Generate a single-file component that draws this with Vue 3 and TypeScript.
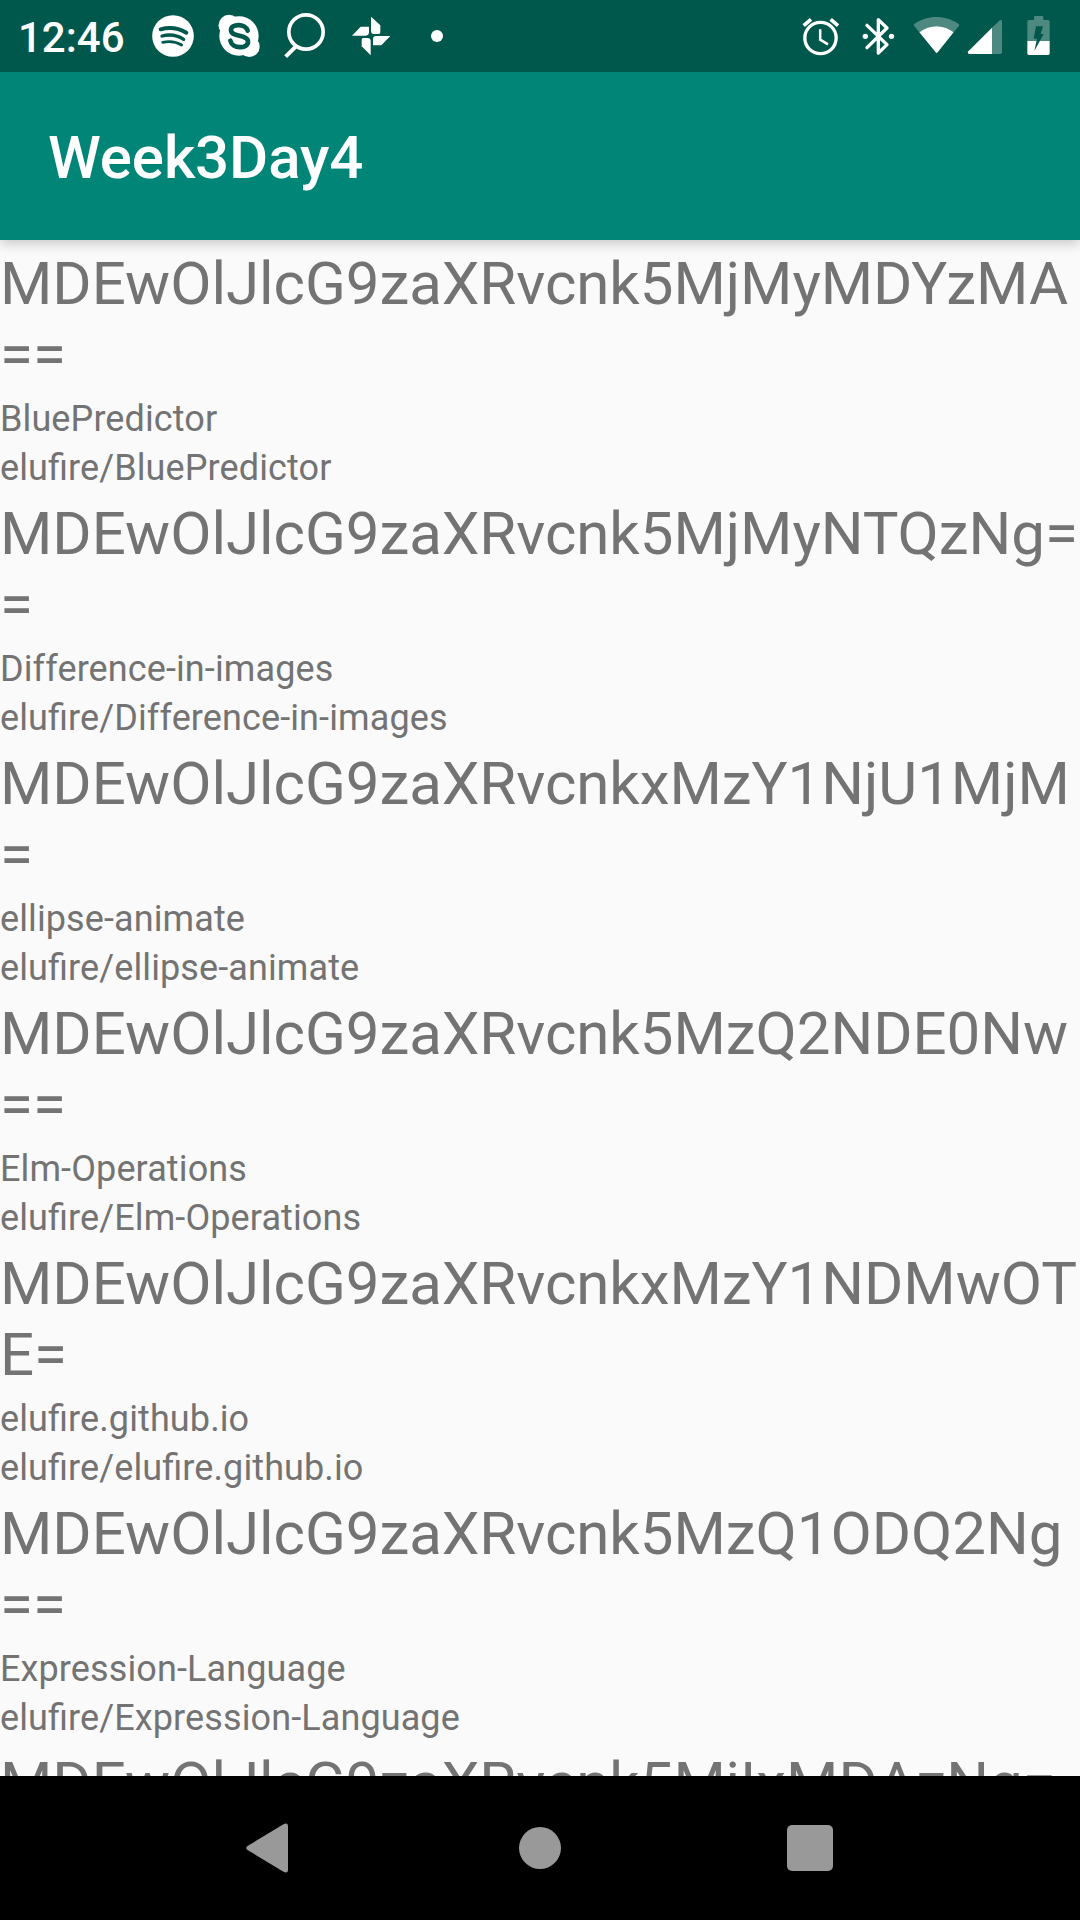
<script setup lang="ts">
interface Repo {
  id: string
  name: string
  fullName: string
}

const title = 'Week3Day4'
const time = '12:46'

const repos: Repo[] = [
  { id: 'MDEwOlJlcG9zaXRvcnk5MjMyMDYzMA==', name: 'BluePredictor', fullName: 'elufire/BluePredictor' },
  { id: 'MDEwOlJlcG9zaXRvcnk5MjMyNTQzNg==', name: 'Difference-in-images', fullName: 'elufire/Difference-in-images' },
  { id: 'MDEwOlJlcG9zaXRvcnkxMzY1NjU1MjM=', name: 'ellipse-animate', fullName: 'elufire/ellipse-animate' },
  { id: 'MDEwOlJlcG9zaXRvcnk5MzQ2NDE0Nw==', name: 'Elm-Operations', fullName: 'elufire/Elm-Operations' },
  { id: 'MDEwOlJlcG9zaXRvcnkxMzY1NDMwOTE=', name: 'elufire.github.io', fullName: 'elufire/elufire.github.io' },
  { id: 'MDEwOlJlcG9zaXRvcnk5MzQ1ODQ2Ng==', name: 'Expression-Language', fullName: 'elufire/Expression-Language' },
  { id: 'MDEwOlJlcG9zaXRvcnk5MjIxMDAzNg=', name: '', fullName: '' },
]
</script>

<template>
  <div class="screen">
    <header class="status">
      <div class="side">
        <span class="time">{{ time }}</span>
        <!-- Spotify -->
        <svg width="42" height="72" viewBox="456 0 126 216">
          <circle cx="519" cy="108" r="62.5" fill="#fff" />
          <g fill="none" stroke="#00574b" stroke-linecap="round">
            <path d="M482 88Q523 77 559 98" stroke-width="12" />
            <path d="M486 108Q522 99 551 118" stroke-width="10" />
            <path d="M488 127Q520 120 545 135" stroke-width="8" />
          </g>
        </svg>
        <!-- Skype -->
        <svg class="gap-l" width="42" height="72" viewBox="654 0 126 216">
          <g fill="#fff">
            <circle cx="717" cy="108" r="59" />
            <circle cx="687" cy="76" r="31.5" />
            <circle cx="748" cy="140" r="31" />
          </g>
          <path d="M743 92C737 70 693 70 693 90C693 113 744 102 744 125C744 148 696 147 691 122" fill="none" stroke="#00574b" stroke-width="14" stroke-linecap="round" />
        </svg>
        <!-- Search -->
        <svg class="gap-m" width="42" height="72" viewBox="69 0 126 216">
          <g fill="none" stroke="#fff" stroke-width="11">
            <circle cx="138" cy="96" r="51.5" />
            <path d="M108 139L77 170" stroke-width="12" />
          </g>
        </svg>
        <!-- Photos -->
        <svg class="gap-p" width="40" height="72" viewBox="273 0 120 216" fill="#fff">
          <path d="M333 50L361 76V97Q361 102 356 102H343Q333 102 333 92Z" />
          <path d="M276 107L302 80H327V97Q327 107 317 107Z" />
          <path d="M332 166L305 139V119Q305 114 310 114H322Q332 114 332 124Z" />
          <path d="M391 108L364 136H339V118Q339 108 349 108Z" />
        </svg>
        <i class="more-dot"></i>
      </div>

      <div class="side">
        <!-- Alarm -->
        <svg width="38" height="72" viewBox="66 0 114 216" fill="none" stroke="#fff">
          <circle cx="121.5" cy="114" r="47" stroke-width="10" />
          <path d="M120.5 88V119L144 133" stroke-width="7.5" />
          <path d="M71 77L93 58M152 58L174 77" stroke-width="11" />
        </svg>
        <!-- Bluetooth -->
        <svg class="gap-b" width="34" height="72" viewBox="246 0 102 216">
          <path d="M261 76L321 134L295 159V59L321 84L261 143" fill="none" stroke="#fff" stroke-width="10" stroke-linejoin="round" stroke-linecap="round" />
          <circle cx="256" cy="109" r="8" fill="#fff" />
          <circle cx="334.5" cy="109" r="8" fill="#fff" />
        </svg>
        <!-- Wi-Fi -->
        <svg class="gap-w" width="47" height="72" viewBox="399 0 141 216" fill="#fff">
          <path d="M402 77Q400 74 403 72C441 44 497 44 536 72Q539 74 537 77L521 97C490 73 449 73 418 97Z" opacity=".3" />
          <path d="M418 97C449 73 490 73 521 97L473 157Q470 161 467 157Z" />
        </svg>
        <!-- Cell signal -->
        <svg class="gap-s" width="35" height="72" viewBox="561 0 105 216" fill="#fff">
          <path d="M636 83L658 62Q666 57 666 65V157Q666 162 661 162H636Z" opacity=".3" />
          <path d="M636 83V162H568Q561 161 565 154Z" />
        </svg>
        <!-- Battery, charging -->
        <svg class="gap-c" width="24" height="72" viewBox="741 0 72 216">
          <path d="M742 123V65Q742 60 747 60H762V52Q762 48 766 48H786Q790 48 790 52V60H804Q809 60 809 65V123Z" fill="#fff" opacity=".3" />
          <path d="M742 123H809V160Q809 165 804 165H747Q742 165 742 160Z" fill="#fff" />
          <path d="M768 79H789L782 102H791L763 153L771 116H761Z" fill="#00574b" />
        </svg>
      </div>
    </header>

    <div class="app-bar">
      <h1>{{ title }}</h1>
    </div>

    <main class="list">
      <article v-for="repo in repos" :key="repo.id" class="row">
        <p class="id">{{ repo.id }}</p>
        <p class="name">{{ repo.name }}</p>
        <p class="name">{{ repo.fullName }}</p>
      </article>
    </main>

    <nav class="nav">
      <span class="key">
        <svg width="48" height="52" viewBox="0 0 48 52">
          <path d="M1.5 24L37.500 2.300Q42 0 42 4.500V47.500Q42 52 37.500 49.700L1.500 28Q-1 26 1.500 24Z" fill="#999" />
        </svg>
      </span>
      <span class="key"><i class="home"></i></span>
      <span class="key"><i class="recents"></i></span>
    </nav>
  </div>
</template>

<style>
body {
  margin: 0;
}
</style>

<style scoped>
.screen {
  display: flex;
  flex-direction: column;
  width: 1080px;
  height: 1920px;
  overflow: hidden;
  background: #fafafa;
  color: #737373;
  font-family: Roboto, "Noto Sans", sans-serif;
}

svg {
  display: block;
  flex: none;
}

.status {
  display: flex;
  flex: none;
  justify-content: space-between;
  height: 72px;
  padding: 0 29px 0 18px;
  background: #00574b;
}

.side {
  display: flex;
  align-items: center;
}

.time {
  box-sizing: border-box;
  width: 134px;
  height: 72px;
  padding-top: 2px;
  color: #fff;
  font-size: 42px;
  font-weight: 500;
  line-height: 72px;
}

.gap-l {
  margin-left: 24px;
}

.gap-m {
  margin-left: 23px;
}

.gap-p {
  margin-left: 26px;
}

.more-dot {
  width: 12px;
  height: 12px;
  margin-left: 40px;
  border-radius: 50%;
  background: #fff;
}

.gap-b {
  margin-left: 22px;
}

.gap-w {
  margin-left: 17px;
}

.gap-s {
  margin-left: 7px;
}

.gap-c {
  margin-left: 25px;
}

.app-bar {
  box-sizing: border-box;
  display: flex;
  flex: none;
  align-items: center;
  height: 168px;
  padding: 4px 0 0 48px;
  background: #008577;
  box-shadow: 0 3px 12px rgba(0, 0, 0, 0.22);
  clip-path: inset(0 0 -24px 0);
  z-index: 1;
}

h1 {
  margin: 0;
  color: #fff;
  font-size: 60px;
  font-weight: 500;
  letter-spacing: -0.1px;
  line-height: 70px;
}

.list {
  flex: 1;
  min-height: 0;
  padding-top: 2px;
  overflow: hidden;
}

.row {
  padding-top: 6px;
}

p {
  margin: 0;
}

.id {
  margin-bottom: 5px;
  font-size: 60px;
  letter-spacing: -0.04px;
  line-height: 71px;
  word-break: break-all;
  line-break: anywhere;
}

.name {
  min-height: 49px;
  font-size: 36px;
  letter-spacing: 0.11px;
  font-feature-settings: "liga" 1;
  line-height: 49px;
}

.name:last-child {
  margin-bottom: -1px;
}

.nav {
  position: relative;
  display: flex;
  flex: none;
  height: 144px;
  padding: 0 135px;
  background: #000;
}

.key {
  display: flex;
  flex: 1;
  align-items: center;
  justify-content: center;
}

.home {
  width: 42px;
  height: 42px;
  border-radius: 50%;
  background: #999;
}

.recents {
  width: 46px;
  height: 46px;
  border-radius: 5px;
  background: #999;
}
</style>
